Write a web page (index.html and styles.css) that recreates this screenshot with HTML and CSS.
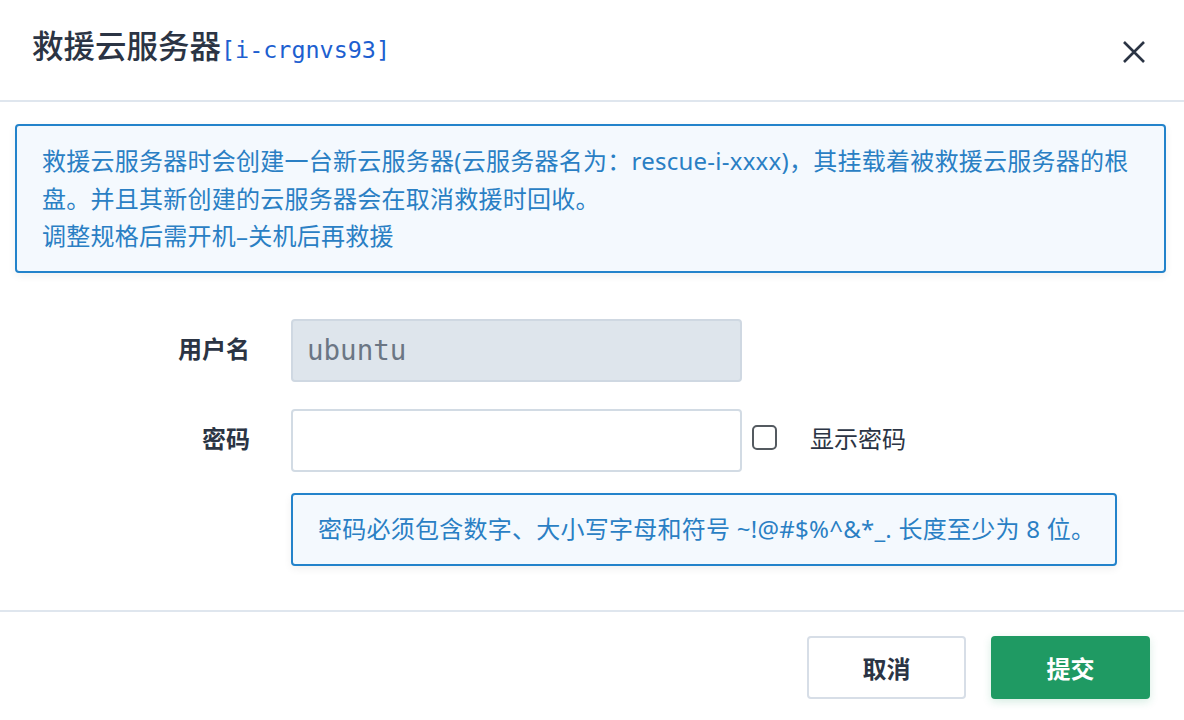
FILE: index.html
```html
<!DOCTYPE html>
<html lang="zh-CN">
<head>
<meta charset="utf-8">
<title>救援云服务器</title>
<link rel="stylesheet" href="styles.css">
</head>
<body>
<div class="modal">
  <header class="modal-header">
    <h1 class="modal-title">救援云服务器<span class="instance-id">[i-crgnvs93]</span></h1>
    <button class="close-btn" aria-label="关闭">
      <svg width="24" height="24" viewBox="0 0 24 24"><path d="M2 2 L22 22 M22 2 L2 22" stroke="#2b3444" stroke-width="2.6" fill="none"/></svg>
    </button>
  </header>
  <div class="modal-body">
    <div class="notice">救援云服务器时会创建一台新云服务器(云服务器名为：rescue-i-xxxx)，其挂载着被救援云服务器的根盘。并且其新创建的云服务器会在取消救援时回收。<br>调整规格后需开机–关机后再救援</div>
    <div class="form">
      <div class="form-row">
        <label class="form-label">用户名</label>
        <div class="form-control">
          <input class="input input-disabled" type="text" value="ubuntu" disabled>
        </div>
      </div>
      <div class="form-row">
        <label class="form-label">密码</label>
        <div class="form-control">
          <input class="input" type="password">
          <span class="checkbox"></span>
          <span class="check-label">显示密码</span>
        </div>
      </div>
      <div class="form-row hint-row">
        <div class="form-label"></div>
        <div class="hint">密码必须包含数字、大小写字母和符号 ~!@#$%^&amp;*_. 长度至少为 8 位。</div>
      </div>
    </div>
  </div>
  <footer class="modal-footer">
    <button class="btn btn-cancel">取消</button>
    <button class="btn btn-submit">提交</button>
  </footer>
</div>
</body>
</html>
```
FILE: styles.css
```css
* { box-sizing: border-box; }
html, body { margin: 0; padding: 0; background: #ffffff; }
body {
  font-family: "Noto Sans CJK SC", "Noto Sans", sans-serif;
  color: #2b3444;
  width: 1184px;
  height: 720px;
  overflow: hidden;
}
.modal { display: flex; flex-direction: column; height: 720px; }
.modal-header {
  height: 102px;
  border-bottom: 2px solid #dfe6ee;
  display: flex;
  align-items: center;
  justify-content: space-between;
  padding: 0 38px 0 32px;
}
.modal-title {
  margin: 0;
  font-size: 31.5px;
  font-weight: 500;
  color: #2b3444;
  line-height: 40px;
  margin-top: -6px;
}
.instance-id {
  font-family: "DejaVu Sans Mono", "Liberation Mono", monospace;
  font-weight: 400;
  font-size: 23.4px;
  color: #1d5fd0;
}
.close-btn {
  background: none;
  border: 0;
  padding: 0;
  width: 24px;
  height: 24px;
  display: flex;
  margin-top: 4px;
}
.modal-body { padding: 22px 18px 0 15px; }
.notice {
  border: 2px solid #2383cb;
  border-radius: 4px;
  background: #f4f9fe;
  color: #2a7fc4;
  font-size: 24px;
  letter-spacing: 0.25px;
  line-height: 37.5px;
  padding: 16px 24px 16px 25px;
  box-shadow: 0 3px 8px rgba(0,0,0,0.06);
  font-family: "Noto Sans", "Noto Sans CJK SC", sans-serif;
}
.form { padding-top: 46px; display: flex; flex-direction: column; gap: 27px; }
.form-row { display: flex; align-items: center; }
.form-label {
  width: 235px;
  flex: none;
  text-align: right;
  font-size: 24px;
  font-weight: 600;
  color: #2b3444;
  margin-right: 41px;
  margin-top: -6px;
}
.form-control { display: flex; align-items: center; }
.input {
  width: 451px;
  height: 63px;
  border: 2px solid #d2dbe4;
  border-radius: 4px;
  background: #fff;
  font-family: "DejaVu Sans Mono", "Liberation Mono", monospace;
  font-size: 27.5px;
  padding: 0 14px;
  color: #2b3444;
  outline: none;
}
.input-disabled { background: #dee5ec; border-color: #cfd8e2; color: #6b7684; -webkit-text-fill-color: #6b7684; opacity: 1; }
.checkbox {
  width: 25px;
  height: 25px;
  border: 2px solid #545a60;
  border-radius: 5px;
  margin-left: 10px;
  background: #fff;
  margin-top: -6px;
}
.check-label { margin-left: 33px; font-size: 24px; color: #2b3444; margin-top: -6px; }
.hint-row { margin-top: -6px; }
.hint-row .form-label { margin-top: 0; }
.hint {
  width: 826px;
  height: 73px;
  border: 2px solid #2383cb;
  border-radius: 4px;
  background: #f4f9fe;
  color: #2a7fc4;
  font-size: 24px;
  letter-spacing: 0.25px;
  display: flex;
  align-items: center;
  padding-left: 25px;
  padding-bottom: 3px;
  box-shadow: 0 3px 8px rgba(0,0,0,0.06);
  font-family: "Noto Sans", "Noto Sans CJK SC", sans-serif;
}
.modal-footer {
  margin-top: 44px;
  border-top: 2px solid #dfe6ee;
  display: flex;
  justify-content: flex-end;
  gap: 25px;
  padding: 24px 34px 0 0;
}
.btn {
  width: 159px;
  height: 63px;
  border-radius: 4px;
  font-family: "Noto Sans CJK SC", sans-serif;
  font-size: 24px;
  font-weight: 600;
  cursor: pointer;
}
.btn-cancel { background: #fff; border: 2px solid #d7dee7; color: #2b3444; }
.btn-submit { background: #1f9a63; border: 0; color: #fff; box-shadow: 0 3px 8px rgba(31,154,99,0.18); }
```
